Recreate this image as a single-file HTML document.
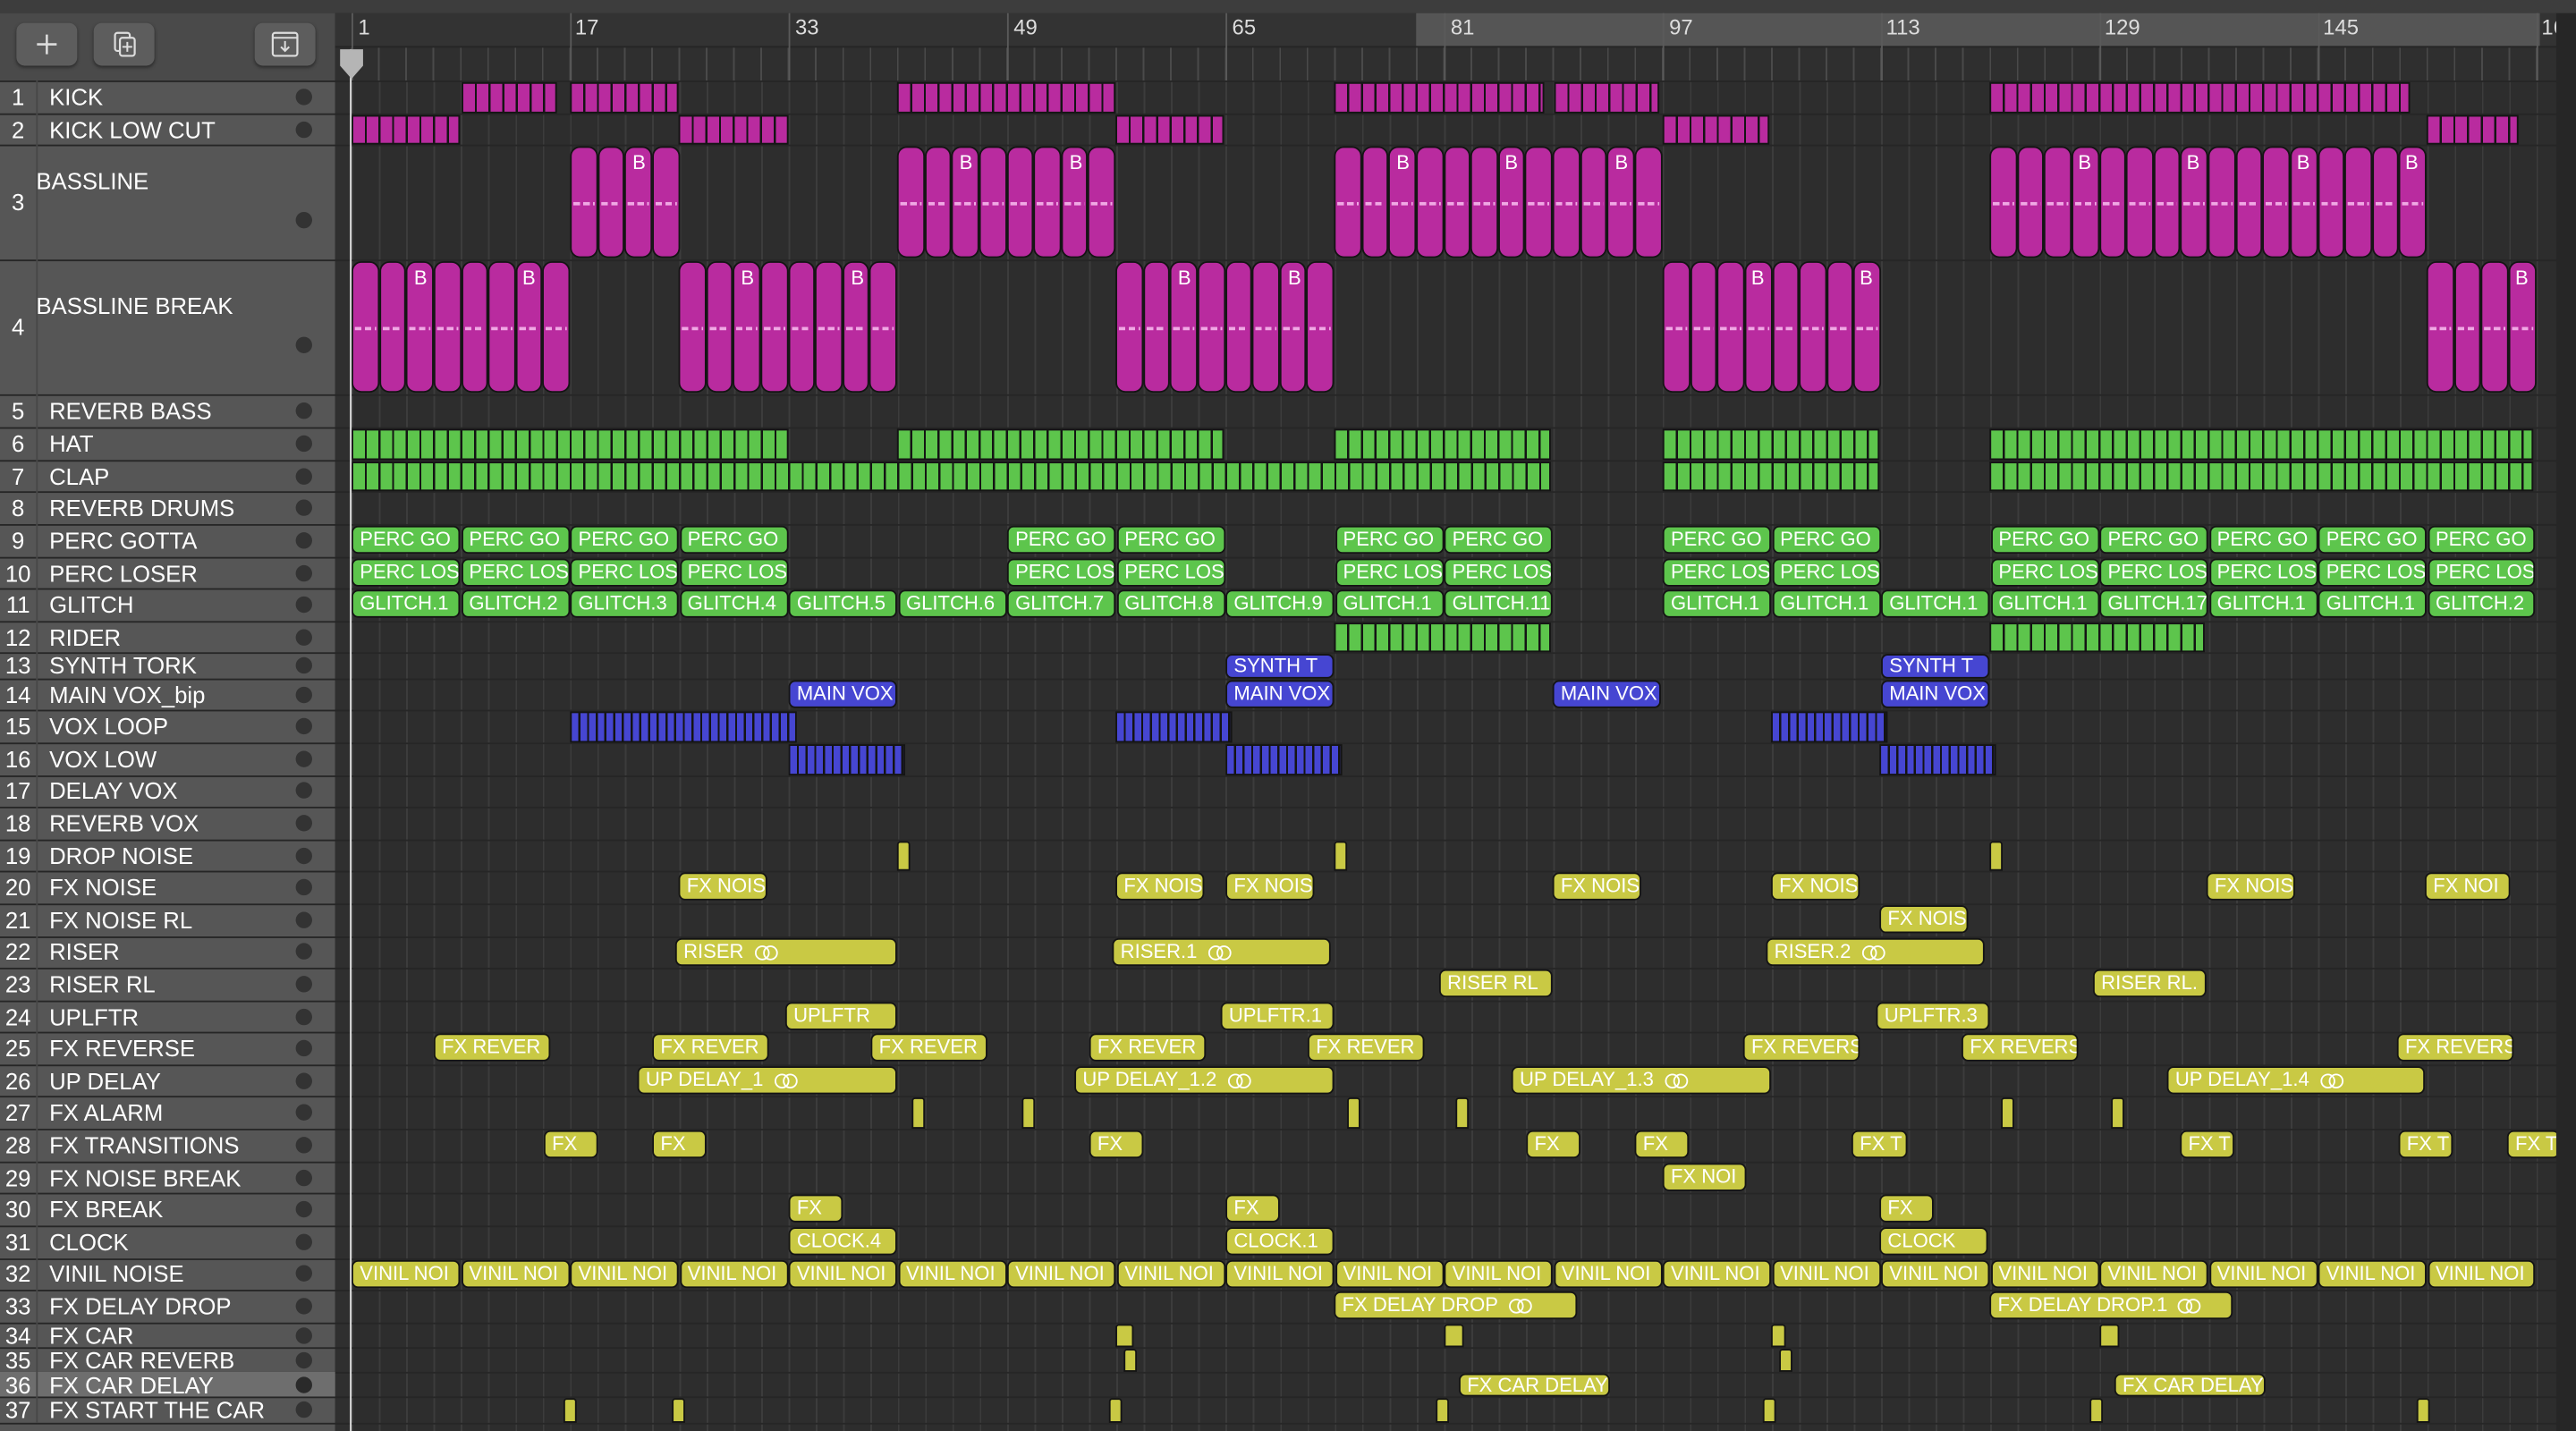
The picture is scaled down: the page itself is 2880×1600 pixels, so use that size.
<!DOCTYPE html>
<html><head><meta charset="utf-8">
<style>
html,body{margin:0;padding:0;background:#2d2d2d;width:2880px;height:1600px;overflow:hidden}
#s{position:absolute;left:0;top:0;width:1568px;height:871px;transform:scale(1.83673,1.83697);transform-origin:0 0;background:#2d2d2d;font-family:"Liberation Sans",Arial,sans-serif;overflow:hidden}
.abs{position:absolute}
#topbar{left:0;top:0;width:1568px;height:8px;background:#3d3d3d}
#lefthead{left:0;top:8px;width:204px;height:41px;background:#4a4a4a;border-bottom:1px solid #3a3a3a}
.btn{position:absolute;top:13px;width:37px;height:26px;border-radius:5px;background:#5d5d5d;box-shadow:0 1px 2px #2a2a2a}
#left{left:0;top:49px;width:204px;height:822px;background:#565656}
#gutter{left:204px;top:8px;width:10px;height:863px;background:#2f2f2f}
#ruler{left:204px;top:8px;width:1354px;height:20px;background:#333}
#cyc{left:862px;top:8px;width:684px;height:20px;background:#555}
#ruler2{left:204px;top:28px;width:1354px;height:21px;background:#2f2f2f;border-top:1px solid #262626;
 background-image:repeating-linear-gradient(90deg,transparent 0 9.5px,#4a4a4a 9.5px 10.5px,transparent 10.5px 16.625px);background-position:0 0}
.rn{position:absolute;top:9px;color:#ddd;font-size:13px}
.rl{position:absolute;top:8px;width:1px;height:41px;background:#5a5a5a}
#grid{left:214px;top:49px;width:1344px;height:822px;background-color:#2d2d2d;
 background-image:repeating-linear-gradient(90deg,#3c3c3c 0 1px,transparent 1px 16.625px)}
#rside{left:1556px;top:8px;width:12px;height:863px;background:#262626}
.sep{position:absolute;left:0;width:1556px;height:1px;background:#262626}
.tn{position:absolute;left:0;width:22px;text-align:center;color:#fff;font-size:14px}
.tl{position:absolute;left:30px;color:#fff;font-size:14px;white-space:nowrap}
.dot{position:absolute;left:180px;width:10px;height:10px;border-radius:50%;background:#333}
.r{position:absolute;height:17px;box-sizing:border-box;border:1px solid #141414;border-radius:4px;color:#fff;font-size:12px;line-height:15px;padding-left:4px;white-space:nowrap;overflow:hidden}
.g{background:#5dc54c}.y{background:#c9c944}.b{background:#4646d2}.m{background:#b92b9f}
.st{position:absolute;box-sizing:border-box;border:1px solid #141414}
.B{position:absolute;color:#fff;font-size:12px;width:16px;text-align:center}
.lp{display:inline-block;vertical-align:-2px;margin-left:6px}
</style></head><body><div id="s">
<div class="abs" id="topbar"></div>
<div class="abs" id="lefthead">
 <div class="btn" style="left:10px;top:6px"><svg width="37" height="26"><path d="M18.5 7v12M12.5 13h12" stroke="#ddd" stroke-width="1.4"/></svg></div>
 <div class="btn" style="left:57px;top:6px"><svg width="37" height="26"><rect x="13" y="6" width="9" height="11" rx="1.5" fill="none" stroke="#ddd" stroke-width="1.2"/><rect x="16" y="9" width="9" height="11" rx="1.5" fill="#5d5d5d" stroke="#ddd" stroke-width="1.2"/><path d="M20.5 11.5v6M17.5 14.5h6" stroke="#ddd" stroke-width="1.1"/></svg></div>
 <div class="btn" style="left:155px;top:6px"><svg width="37" height="26"><rect x="11" y="6" width="15" height="14" rx="1.5" fill="none" stroke="#ddd" stroke-width="1.2"/><path d="M11 9h15M18.5 11v6M16 14.5l2.5 2.5 2.5-2.5" fill="none" stroke="#ddd" stroke-width="1.1"/></svg></div>
</div>
<div class="abs" id="left"></div>
<div class="abs" id="gutter"></div>
<div class="abs" id="ruler"></div>
<div class="abs" id="cyc"></div>
<div class="abs" id="ruler2"></div>
<div class="abs" id="grid"></div>
<div id="rulertxt">
<div class="rl" style="left:214px"></div><span class="rn" style="left:218px">1</span>
<div class="rl" style="left:347px"></div><span class="rn" style="left:350px">17</span>
<div class="rl" style="left:480px"></div><span class="rn" style="left:484px">33</span>
<div class="rl" style="left:613px"></div><span class="rn" style="left:617px">49</span>
<div class="rl" style="left:746px"></div><span class="rn" style="left:750px">65</span>
<div class="rl" style="left:879px"></div><span class="rn" style="left:883px">81</span>
<div class="rl" style="left:1012px"></div><span class="rn" style="left:1016px">97</span>
<div class="rl" style="left:1145px"></div><span class="rn" style="left:1148px">113</span>
<div class="rl" style="left:1278px"></div><span class="rn" style="left:1281px">129</span>
<div class="rl" style="left:1411px"></div><span class="rn" style="left:1414px">145</span>
<div class="rl" style="left:1544px"></div><span class="rn" style="left:1547px">161</span>
</div>
<div id="rows"></div>
<div class="abs" style="left:0;top:835px;width:204px;height:15px;background:#6e6e6e"></div>
<div class="abs" style="left:22px;top:49px;width:1px;height:817px;background:#474747"></div>
<!-- track names -->
<div id="names">
<span class="tn" style="top:51px">1</span><span class="tl" style="top:51px">KICK</span><span class="dot" style="top:54px"></span>
<span class="tn" style="top:71px">2</span><span class="tl" style="top:71px">KICK LOW CUT</span><span class="dot" style="top:74px"></span>
<span class="tn" style="top:115px">3</span><span class="tl" style="top:102px;left:22px">BASSLINE</span><span class="dot" style="top:129px"></span>
<span class="tn" style="top:191px">4</span><span class="tl" style="top:178px;left:22px">BASSLINE BREAK</span><span class="dot" style="top:205px"></span>
<span class="tn" style="top:242px">5</span><span class="tl" style="top:242px">REVERB BASS</span><span class="dot" style="top:245px"></span>
<span class="tn" style="top:262px">6</span><span class="tl" style="top:262px">HAT</span><span class="dot" style="top:265px"></span>
<span class="tn" style="top:282px">7</span><span class="tl" style="top:282px">CLAP</span><span class="dot" style="top:285px"></span>
<span class="tn" style="top:301px">8</span><span class="tl" style="top:301px">REVERB DRUMS</span><span class="dot" style="top:304px"></span>
<span class="tn" style="top:321px">9</span><span class="tl" style="top:321px">PERC GOTTA</span><span class="dot" style="top:324px"></span>
<span class="tn" style="top:341px">10</span><span class="tl" style="top:341px">PERC LOSER</span><span class="dot" style="top:344px"></span>
<span class="tn" style="top:360px">11</span><span class="tl" style="top:360px">GLITCH</span><span class="dot" style="top:363px"></span>
<span class="tn" style="top:380px">12</span><span class="tl" style="top:380px">RIDER</span><span class="dot" style="top:383px"></span>
<span class="tn" style="top:397px">13</span><span class="tl" style="top:397px">SYNTH TORK</span><span class="dot" style="top:400px"></span>
<span class="tn" style="top:415px">14</span><span class="tl" style="top:415px">MAIN VOX_bip</span><span class="dot" style="top:418px"></span>
<span class="tn" style="top:434px">15</span><span class="tl" style="top:434px">VOX LOOP</span><span class="dot" style="top:437px"></span>
<span class="tn" style="top:454px">16</span><span class="tl" style="top:454px">VOX LOW</span><span class="dot" style="top:457px"></span>
<span class="tn" style="top:473px">17</span><span class="tl" style="top:473px">DELAY VOX</span><span class="dot" style="top:476px"></span>
<span class="tn" style="top:493px">18</span><span class="tl" style="top:493px">REVERB VOX</span><span class="dot" style="top:496px"></span>
<span class="tn" style="top:513px">19</span><span class="tl" style="top:513px">DROP NOISE</span><span class="dot" style="top:516px"></span>
<span class="tn" style="top:532px">20</span><span class="tl" style="top:532px">FX NOISE</span><span class="dot" style="top:535px"></span>
<span class="tn" style="top:552px">21</span><span class="tl" style="top:552px">FX NOISE RL</span><span class="dot" style="top:555px"></span>
<span class="tn" style="top:571px">22</span><span class="tl" style="top:571px">RISER</span><span class="dot" style="top:574px"></span>
<span class="tn" style="top:591px">23</span><span class="tl" style="top:591px">RISER RL</span><span class="dot" style="top:594px"></span>
<span class="tn" style="top:611px">24</span><span class="tl" style="top:611px">UPLFTR</span><span class="dot" style="top:614px"></span>
<span class="tn" style="top:630px">25</span><span class="tl" style="top:630px">FX REVERSE</span><span class="dot" style="top:633px"></span>
<span class="tn" style="top:650px">26</span><span class="tl" style="top:650px">UP DELAY</span><span class="dot" style="top:653px"></span>
<span class="tn" style="top:669px">27</span><span class="tl" style="top:669px">FX ALARM</span><span class="dot" style="top:672px"></span>
<span class="tn" style="top:689px">28</span><span class="tl" style="top:689px">FX TRANSITIONS</span><span class="dot" style="top:692px"></span>
<span class="tn" style="top:709px">29</span><span class="tl" style="top:709px">FX NOISE BREAK</span><span class="dot" style="top:712px"></span>
<span class="tn" style="top:728px">30</span><span class="tl" style="top:728px">FX BREAK</span><span class="dot" style="top:731px"></span>
<span class="tn" style="top:748px">31</span><span class="tl" style="top:748px">CLOCK</span><span class="dot" style="top:751px"></span>
<span class="tn" style="top:767px">32</span><span class="tl" style="top:767px">VINIL NOISE</span><span class="dot" style="top:770px"></span>
<span class="tn" style="top:787px">33</span><span class="tl" style="top:787px">FX DELAY DROP</span><span class="dot" style="top:790px"></span>
<span class="tn" style="top:805px">34</span><span class="tl" style="top:805px">FX CAR</span><span class="dot" style="top:808px"></span>
<span class="tn" style="top:820px">35</span><span class="tl" style="top:820px">FX CAR REVERB</span><span class="dot" style="top:823px"></span>
<span class="tn" style="top:835px">36</span><span class="tl" style="top:835px">FX CAR DELAY</span><span class="dot" style="top:838px;background:#2a2a2a"></span>
<span class="tn" style="top:850px">37</span><span class="tl" style="top:850px">FX START THE CAR</span><span class="dot" style="top:853px"></span>
</div>
<div id="gen"></div>
<!-- labeled regions -->
<div id="lab">
<!-- row 9 PERC GO -->
<div class="r g" style="left:214px;top:320px;width:66px">PERC GO</div><div class="r g" style="left:280.5px;top:320px;width:66px">PERC GO</div><div class="r g" style="left:347px;top:320px;width:66px">PERC GO</div><div class="r g" style="left:413.5px;top:320px;width:66px">PERC GO</div>
<div class="r g" style="left:613px;top:320px;width:66px">PERC GO</div><div class="r g" style="left:679.5px;top:320px;width:66px">PERC GO</div>
<div class="r g" style="left:812.5px;top:320px;width:66px">PERC GO</div><div class="r g" style="left:879px;top:320px;width:66px">PERC GO</div>
<div class="r g" style="left:1012px;top:320px;width:66px">PERC GO</div><div class="r g" style="left:1078.5px;top:320px;width:66px">PERC GO</div>
<div class="r g" style="left:1211.5px;top:320px;width:66px">PERC GO</div><div class="r g" style="left:1278px;top:320px;width:66px">PERC GO</div><div class="r g" style="left:1344.5px;top:320px;width:66px">PERC GO</div><div class="r g" style="left:1411px;top:320px;width:66px">PERC GO</div><div class="r g" style="left:1477.5px;top:320px;width:65px">PERC GO</div>
<!-- row 10 -->
<div class="r g" style="left:214px;top:340px;width:66px">PERC LOS</div><div class="r g" style="left:280.5px;top:340px;width:66px">PERC LOS</div><div class="r g" style="left:347px;top:340px;width:66px">PERC LOS</div><div class="r g" style="left:413.5px;top:340px;width:66px">PERC LOS</div>
<div class="r g" style="left:613px;top:340px;width:66px">PERC LOS</div><div class="r g" style="left:679.5px;top:340px;width:66px">PERC LOS</div>
<div class="r g" style="left:812.5px;top:340px;width:66px">PERC LOS</div><div class="r g" style="left:879px;top:340px;width:66px">PERC LOS</div>
<div class="r g" style="left:1012px;top:340px;width:66px">PERC LOS</div><div class="r g" style="left:1078.5px;top:340px;width:66px">PERC LOS</div>
<div class="r g" style="left:1211.5px;top:340px;width:66px">PERC LOS</div><div class="r g" style="left:1278px;top:340px;width:66px">PERC LOS</div><div class="r g" style="left:1344.5px;top:340px;width:66px">PERC LOS</div><div class="r g" style="left:1411px;top:340px;width:66px">PERC LOS</div><div class="r g" style="left:1477.5px;top:340px;width:65px">PERC LOS</div>
<!-- row 11 -->
<div class="r g" style="left:214px;top:359px;width:66px">GLITCH.1</div><div class="r g" style="left:280.5px;top:359px;width:66px">GLITCH.2</div><div class="r g" style="left:347px;top:359px;width:66px">GLITCH.3</div><div class="r g" style="left:413.5px;top:359px;width:66px">GLITCH.4</div><div class="r g" style="left:480px;top:359px;width:66px">GLITCH.5</div><div class="r g" style="left:546.5px;top:359px;width:66px">GLITCH.6</div><div class="r g" style="left:613px;top:359px;width:66px">GLITCH.7</div><div class="r g" style="left:679.5px;top:359px;width:66px">GLITCH.8</div><div class="r g" style="left:746px;top:359px;width:66px">GLITCH.9</div><div class="r g" style="left:812.5px;top:359px;width:66px">GLITCH.1</div><div class="r g" style="left:879px;top:359px;width:66px">GLITCH.11</div>
<div class="r g" style="left:1012px;top:359px;width:66px">GLITCH.1</div><div class="r g" style="left:1078.5px;top:359px;width:66px">GLITCH.1</div><div class="r g" style="left:1145px;top:359px;width:66px">GLITCH.1</div><div class="r g" style="left:1211.5px;top:359px;width:66px">GLITCH.1</div><div class="r g" style="left:1278px;top:359px;width:66px">GLITCH.17</div><div class="r g" style="left:1344.5px;top:359px;width:66px">GLITCH.1</div><div class="r g" style="left:1411px;top:359px;width:66px">GLITCH.1</div><div class="r g" style="left:1477.5px;top:359px;width:65px">GLITCH.2</div>
<!-- blue -->
<div class="r b" style="left:746px;top:398px;width:66px;height:15px;line-height:13px">SYNTH T</div><div class="r b" style="left:1145px;top:398px;width:66px;height:15px;line-height:13px">SYNTH T</div>
<div class="r b" style="left:480px;top:414px;width:66px">MAIN VOX</div><div class="r b" style="left:746px;top:414px;width:66px">MAIN VOX</div><div class="r b" style="left:945px;top:414px;width:66px">MAIN VOX</div><div class="r b" style="left:1145px;top:414px;width:66px">MAIN VOX</div>
<!-- row 20 -->
<div class="r y" style="left:413px;top:531px;width:54px">FX NOIS</div><div class="r y" style="left:679px;top:531px;width:54px">FX NOIS</div><div class="r y" style="left:746px;top:531px;width:54px">FX NOIS</div><div class="r y" style="left:945px;top:531px;width:54px">FX NOIS</div><div class="r y" style="left:1078px;top:531px;width:54px">FX NOIS</div><div class="r y" style="left:1343px;top:531px;width:54px">FX NOIS</div><div class="r y" style="left:1476px;top:531px;width:52px">FX NOI</div>
<div class="r y" style="left:1144px;top:551px;width:54px">FX NOIS</div>
<div class="r y" style="left:411px;top:571px;width:135px">RISER<svg class="lp" width="16" height="10"><circle cx="5" cy="5" r="4" fill="none" stroke="#fff"/><circle cx="10" cy="5" r="4" fill="none" stroke="#fff"/></svg></div>
<div class="r y" style="left:677px;top:571px;width:133px">RISER.1<svg class="lp" width="16" height="10"><circle cx="5" cy="5" r="4" fill="none" stroke="#fff"/><circle cx="10" cy="5" r="4" fill="none" stroke="#fff"/></svg></div>
<div class="r y" style="left:1075px;top:571px;width:133px">RISER.2<svg class="lp" width="16" height="10"><circle cx="5" cy="5" r="4" fill="none" stroke="#fff"/><circle cx="10" cy="5" r="4" fill="none" stroke="#fff"/></svg></div>
<div class="r y" style="left:876px;top:590px;width:69px">RISER RL</div><div class="r y" style="left:1274px;top:590px;width:69px">RISER RL.</div>
<div class="r y" style="left:478px;top:610px;width:68px">UPLFTR</div><div class="r y" style="left:743px;top:610px;width:69px">UPLFTR.1</div><div class="r y" style="left:1142px;top:610px;width:69px">UPLFTR.3</div>
<div class="r y" style="left:264px;top:629px;width:71px">FX REVER</div><div class="r y" style="left:397px;top:629px;width:71px">FX REVER</div><div class="r y" style="left:530px;top:629px;width:71px">FX REVER</div><div class="r y" style="left:663px;top:629px;width:71px">FX REVER</div><div class="r y" style="left:796px;top:629px;width:71px">FX REVER</div><div class="r y" style="left:1061px;top:629px;width:71px">FX REVERS</div><div class="r y" style="left:1194px;top:629px;width:71px">FX REVERS</div><div class="r y" style="left:1459px;top:629px;width:71px">FX REVERS</div>
<div class="r y" style="left:388px;top:649px;width:158px">UP DELAY_1<svg class="lp" width="16" height="10"><circle cx="5" cy="5" r="4" fill="none" stroke="#fff"/><circle cx="10" cy="5" r="4" fill="none" stroke="#fff"/></svg></div>
<div class="r y" style="left:654px;top:649px;width:158px">UP DELAY_1.2<svg class="lp" width="16" height="10"><circle cx="5" cy="5" r="4" fill="none" stroke="#fff"/><circle cx="10" cy="5" r="4" fill="none" stroke="#fff"/></svg></div>
<div class="r y" style="left:920px;top:649px;width:158px">UP DELAY_1.3<svg class="lp" width="16" height="10"><circle cx="5" cy="5" r="4" fill="none" stroke="#fff"/><circle cx="10" cy="5" r="4" fill="none" stroke="#fff"/></svg></div>
<div class="r y" style="left:1319px;top:649px;width:157px">UP DELAY_1.4<svg class="lp" width="16" height="10"><circle cx="5" cy="5" r="4" fill="none" stroke="#fff"/><circle cx="10" cy="5" r="4" fill="none" stroke="#fff"/></svg></div>
<div class="r y" style="left:331px;top:688px;width:33px">FX</div><div class="r y" style="left:397px;top:688px;width:33px">FX</div><div class="r y" style="left:663px;top:688px;width:33px">FX</div><div class="r y" style="left:929px;top:688px;width:33px">FX</div><div class="r y" style="left:995px;top:688px;width:33px">FX</div><div class="r y" style="left:1127px;top:688px;width:34px">FX T</div><div class="r y" style="left:1327px;top:688px;width:33px">FX T</div><div class="r y" style="left:1460px;top:688px;width:33px">FX T</div><div class="r y" style="left:1526px;top:688px;width:32px">FX T</div>
<div class="r y" style="left:1012px;top:708px;width:51px">FX NOI</div>
<div class="r y" style="left:480px;top:727px;width:33px">FX</div><div class="r y" style="left:746px;top:727px;width:33px">FX</div><div class="r y" style="left:1144px;top:727px;width:33px">FX</div>
<div class="r y" style="left:480px;top:747px;width:66px">CLOCK.4</div><div class="r y" style="left:746px;top:747px;width:66px">CLOCK.1</div><div class="r y" style="left:1144px;top:747px;width:66px">CLOCK</div>
<div class="r y" style="left:214px;top:767px;width:66px">VINIL NOI</div><div class="r y" style="left:280.5px;top:767px;width:66px">VINIL NOI</div><div class="r y" style="left:347px;top:767px;width:66px">VINIL NOI</div><div class="r y" style="left:413.5px;top:767px;width:66px">VINIL NOI</div><div class="r y" style="left:480px;top:767px;width:66px">VINIL NOI</div><div class="r y" style="left:546.5px;top:767px;width:66px">VINIL NOI</div><div class="r y" style="left:613px;top:767px;width:66px">VINIL NOI</div><div class="r y" style="left:679.5px;top:767px;width:66px">VINIL NOI</div><div class="r y" style="left:746px;top:767px;width:66px">VINIL NOI</div><div class="r y" style="left:812.5px;top:767px;width:66px">VINIL NOI</div><div class="r y" style="left:879px;top:767px;width:66px">VINIL NOI</div><div class="r y" style="left:945.5px;top:767px;width:66px">VINIL NOI</div><div class="r y" style="left:1012px;top:767px;width:66px">VINIL NOI</div><div class="r y" style="left:1078.5px;top:767px;width:66px">VINIL NOI</div><div class="r y" style="left:1145px;top:767px;width:66px">VINIL NOI</div><div class="r y" style="left:1211.5px;top:767px;width:66px">VINIL NOI</div><div class="r y" style="left:1278px;top:767px;width:66px">VINIL NOI</div><div class="r y" style="left:1344.5px;top:767px;width:66px">VINIL NOI</div><div class="r y" style="left:1411px;top:767px;width:66px">VINIL NOI</div><div class="r y" style="left:1477.5px;top:767px;width:65px">VINIL NOI</div>
<div class="r y" style="left:812px;top:786px;width:148px">FX DELAY DROP<svg class="lp" width="16" height="10"><circle cx="5" cy="5" r="4" fill="none" stroke="#fff"/><circle cx="10" cy="5" r="4" fill="none" stroke="#fff"/></svg></div>
<div class="r y" style="left:1211px;top:786px;width:148px">FX DELAY DROP.1<svg class="lp" width="16" height="10"><circle cx="5" cy="5" r="4" fill="none" stroke="#fff"/><circle cx="10" cy="5" r="4" fill="none" stroke="#fff"/></svg></div>
<div class="r y" style="left:888px;top:836px;width:92px;height:14px;line-height:12px">FX CAR DELAY</div><div class="r y" style="left:1287px;top:836px;width:92px;height:14px;line-height:12px">FX CAR DELAY</div>
</div>
<div id="Bs">
<span class="B" style="left:381px;top:92px">B</span>
<span class="B" style="left:580px;top:92px">B</span><span class="B" style="left:647px;top:92px">B</span>
<span class="B" style="left:846px;top:92px">B</span><span class="B" style="left:912px;top:92px">B</span><span class="B" style="left:979px;top:92px">B</span>
<span class="B" style="left:1261px;top:92px">B</span><span class="B" style="left:1327px;top:92px">B</span><span class="B" style="left:1394px;top:92px">B</span><span class="B" style="left:1460px;top:92px">B</span>
<span class="B" style="left:248px;top:162px">B</span><span class="B" style="left:314px;top:162px">B</span>
<span class="B" style="left:447px;top:162px">B</span><span class="B" style="left:514px;top:162px">B</span>
<span class="B" style="left:713px;top:162px">B</span><span class="B" style="left:780px;top:162px">B</span>
<span class="B" style="left:1062px;top:162px">B</span><span class="B" style="left:1128px;top:162px">B</span>
<span class="B" style="left:1527px;top:162px">B</span>
</div>
<div class="abs" id="rside"></div>
<!-- playhead -->
<div class="abs" style="left:213px;top:30px;width:1px;height:841px;background:#e8e8e8"></div>
<svg class="abs" style="left:205px;top:29px" width="18" height="20"><path d="M2 1h14v10l-7 8-7-8z" fill="#b5b5b5"/></svg>
<script>
var tops=[49,69,88,158,240,260,280,299,319,339,358,378,397,413,432,452,472,491,511,530,550,570,589,609,628,648,667,687,707,726,746,766,785,805,820,835,850,866];
var rows=document.getElementById('rows'),gen=document.getElementById('gen'),h='';
for(var i=0;i<tops.length;i++){h+='<div class="sep" style="top:'+tops[i]+'px;left:0"></div>';}
rows.innerHTML=h;
var C={m:'#b92b9f',g:'#5dc54c',b:'#4646d2',y:'#c9c944'};
var BW=8.3125;
function st(r,x1,x2,c,step){var t=tops[r-1],hh=tops[r]-t;step=step||BW;
 return '<div class="st" style="left:'+x1+'px;top:'+(t+1)+'px;width:'+(x2-x1)+'px;height:'+(hh-1)+'px;background:repeating-linear-gradient(90deg,'+C[c]+' 0 '+(step-1.3)+'px,#141414 '+(step-1.3)+'px '+step+'px)"></div>';}
function sm(r,x1,x2){var t=tops[r-1],hh=tops[r]-t;return '<div class="st" style="left:'+x1+'px;top:'+(t+1)+'px;width:'+(x2-x1)+'px;height:'+(hh-1)+'px;background:#c9c944;border-radius:2px 2px 0 0"></div>';}
function blk(r,x1,n){var t=tops[r-1],hh=tops[r]-t,s='',w=16.625;for(var k=0;k<n;k++){s+='<div class="st" style="left:'+(x1+k*w)+'px;top:'+(t+1)+'px;width:'+w+'px;height:'+(hh-2)+'px;background:#b92b9f;border-radius:6px;border-width:1.5px"><div style="position:absolute;left:1px;right:1px;top:'+((hh-2)/2-1)+'px;height:2px;background:repeating-linear-gradient(90deg,#f0a8e4 0 4px,transparent 4px 6px)"></div></div>';}return s;}
var o='';
o+=st(1,281,339,'m')+st(1,347,413,'m')+st(1,546,679,'m')+st(1,812,940,'m')+st(1,946,1010,'m')+st(1,1211,1467,'m');
o+=st(2,214,280,'m')+st(2,413,480,'m')+st(2,679,745,'m')+st(2,1012,1077,'m')+st(2,1477,1533,'m');
o+=blk(3,347,4)+blk(3,546,8)+blk(3,812,12)+blk(3,1211,16);
o+=blk(4,214,8)+blk(4,413,8)+blk(4,679,8)+blk(4,1012,8)+blk(4,1477,4);
o+=st(6,214,480,'g')+st(6,546,745,'g')+st(6,812,944,'g')+st(6,1012,1144,'g')+st(6,1211,1542,'g');
o+=st(7,214,944,'g')+st(7,1012,1144,'g')+st(7,1211,1542,'g');
o+=st(12,812,944,'g')+st(12,1211,1342,'g');
o+=st(15,347,485,'b',5.3)+st(15,679,750,'b',5.3)+st(15,1078,1149,'b',5.3);
o+=st(16,480,551,'b',5.3)+st(16,746,817,'b',5.3)+st(16,1144,1215,'b',5.3);
[[546,554],[812,820],[1211,1219]].forEach(function(a){o+=sm(19,a[0],a[1]);});
[[555,563],[622,630],[820,828],[886,894],[1218,1226],[1285,1293]].forEach(function(a){o+=sm(27,a[0],a[1]);});
[[679,690],[879,891],[1078,1087],[1278,1290]].forEach(function(a){o+=sm(34,a[0],a[1]);});
[[684,692],[1083,1091]].forEach(function(a){o+=sm(35,a[0],a[1]);});
[[343,351],[409,417],[675,683],[874,882],[1073,1081],[1272,1280],[1471,1479]].forEach(function(a){o+=sm(37,a[0],a[1]);});
gen.innerHTML=o;
</script>
</div></body></html>
